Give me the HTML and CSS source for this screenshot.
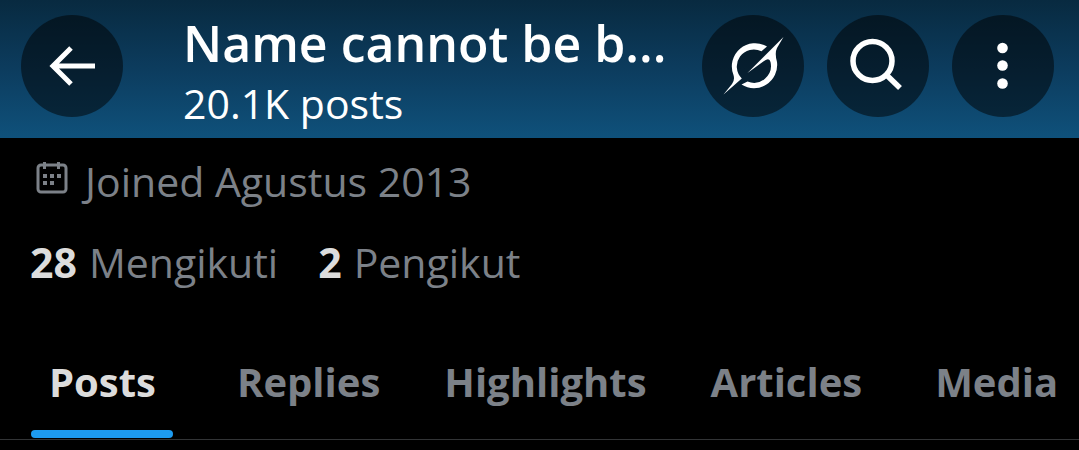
FILE: index.html
```html
<!DOCTYPE html>
<html lang="en">
<head>
    <meta charset="UTF-8">
    <meta name="viewport" content="width=device-width, initial-scale=1">
    <title>Profile</title>
    <link rel="stylesheet" href="styles.css">
</head>
<body>
<header class="topbar">
    <button type="button" class="round" aria-label="Back">
        <svg viewBox="0 0 102 102"><path d="M74 51H32M50 33L32 51L50 69" fill="none" stroke="#fff" stroke-width="5"/></svg>
    </button>
    <div class="title">
        <h1>Name cannot be b...</h1>
        <p>20.1K posts</p>
    </div>
    <div class="actions">
        <button type="button" class="round" aria-label="Grok">
            <svg viewBox="0 0 102 102" fill="#fff">
                <path d="M65 31.5A23.2 23.2 0 0 0 31.5 60Q33 65 30 69L21.5 79.5L39.8 63.5A17 17 0 0 1 59.5 36.3Z"/>
                <path d="M81.5 22L45.5 58L62 46Q67.500 42 68.500 47A17 17 0 0 1 45.500 66.500L39.500 69.500A23.200 23.200 0 0 0 75 47Q72.500 38 75 33Z"/>
            </svg>
        </button>
        <button type="button" class="round" aria-label="Search">
            <svg viewBox="0 0 102 102" fill="none" stroke="#fff" stroke-width="5.500"><circle cx="45.500" cy="46" r="19.500"/><path d="M59 59.500L73 73"/></svg>
        </button>
        <button type="button" class="round" aria-label="More">
            <svg viewBox="0 0 102 102" fill="#fff"><circle cx="50.500" cy="33" r="5.300"/><circle cx="50.500" cy="50.500" r="5.300"/><circle cx="50.500" cy="68.500" r="5.300"/></svg>
        </button>
    </div>
</header>

<main>
    <p class="joined">
        <svg viewBox="0 0 32 32">
            <rect x="2" y="3" width="28" height="27" rx="3" fill="none" stroke="#7c8188" stroke-width="3"/>
            <path d="M7 0h3v7H7zM21 0h3v7h-3zM7 12h4v4H7zM14 12h4v4h-4zM21 12h4v4h-4zM7 19h4v4H7zM14 19h4v4h-4z" fill="#7c8188"/>
        </svg>
        <span>Joined Agustus 2013</span>
    </p>
    <div class="follow">
        <a href="#following"><b>28</b> Mengikuti</a>
        <a href="#followers"><b>2</b> Pengikut</a>
    </div>
    <nav class="tabs">
        <a href="#posts" class="active">Posts</a>
        <a href="#replies">Replies</a>
        <a href="#highlights">Highlights</a>
        <a href="#articles">Articles</a>
        <a href="#media">Media</a>
    </nav>
</main>
</body>
</html>
```
FILE: styles.css
```css
*{margin:0;padding:0;box-sizing:border-box;}

body{background:#000;color:#7c8188;font-family:"Open Sans","Noto Sans",sans-serif;font-size:41px;line-height:48px;}
a{text-decoration:none;color:inherit;}
svg{display:block;}

.topbar{
    display:flex;
    align-items:center;
    height:138px;
    padding:0 25px 6px 21px;
    background:linear-gradient(#082a40,#0c3c5e 50%,#0f517b);
    color:#fff;
}
.round{flex:none;width:102px;height:102px;border:0;border-radius:50%;background:rgba(0,0,0,0.5);cursor:pointer;}
.round svg{width:102px;height:102px;}
.title{flex:1;min-width:0;margin-left:60px;padding-top:10px;white-space:nowrap;}
.title h1{font-size:50px;font-weight:600;line-height:64px;}
.title p{line-height:56px;}
.actions{display:flex;gap:23px;margin-left:16px;}

.joined{display:flex;align-items:center;gap:17px;padding:19px 36px 0;}
.joined svg{width:32px;height:32px;margin-bottom:6px;}
.follow{display:flex;gap:40px;padding:33px 30px 0;}
.follow a{display:flex;gap:12px;}
.follow b{color:#dcdcdc;}

.tabs{display:flex;margin-top:53px;border-bottom:1px solid #323436;overflow:hidden;font-size:40px;font-weight:700;}
.tabs a{position:relative;flex:none;min-width:205px;padding:19px 32px 33px;text-align:center;}
.tabs .active{color:#dcdcdc;}
.tabs .active:after{content:"";position:absolute;left:31px;right:32px;bottom:1px;height:8px;border-radius:4px;background:#1d9bf0;}
```
